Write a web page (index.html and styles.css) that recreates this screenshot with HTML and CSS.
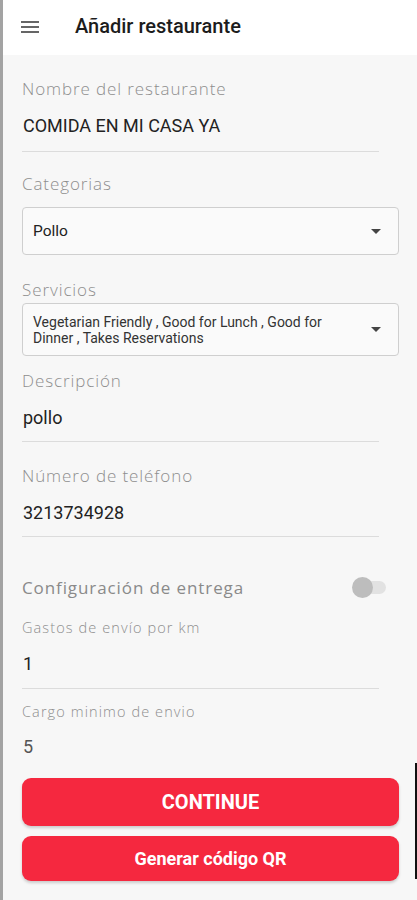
FILE: index.html
```html
<!DOCTYPE html>
<html lang="es">
<head>
<meta charset="UTF-8" />
<meta name="viewport" content="width=device-width, initial-scale=1" />
<title>Añadir restaurante</title>
<link rel="stylesheet" href="styles.css">
</head>
<body>
  <div class="screen">
    <header class="app-bar">
      <svg class="menu-icon" width="18" height="12" viewBox="0 0 18 12" aria-hidden="true">
        <rect x="0" y="0" width="18" height="2" fill="#666"/>
        <rect x="0" y="5" width="18" height="2" fill="#666"/>
        <rect x="0" y="10" width="18" height="2" fill="#666"/>
      </svg>
      <h1 class="app-title">Añadir restaurante</h1>
    </header>

    <main class="form">
      <div class="field field-name">
        <label class="label">Nombre del restaurante</label>
        <div class="value value-caps">COMIDA EN MI CASA YA</div>
      </div>

      <label class="label label-cat">Categorias</label>
      <div class="select select-cat">
        <span class="select-text">Pollo</span>
        <span class="caret"></span>
      </div>

      <label class="label label-serv">Servicios</label>
      <div class="select select-serv">
        <span class="select-text small">Vegetarian Friendly , Good for Lunch , Good for Dinner , Takes Reservations</span>
        <span class="caret"></span>
      </div>

      <div class="field field-desc">
        <label class="label">Descripción</label>
        <div class="value">pollo</div>
      </div>

      <div class="field field-phone">
        <label class="label">Número de teléfono</label>
        <div class="value">3213734928</div>
      </div>

      <div class="toggle-row">
        <span class="toggle-label">Configuración de entrega</span>
        <span class="switch"><span class="thumb"></span></span>
      </div>

      <div class="field field-km">
        <label class="label label-small">Gastos de envío por km</label>
        <div class="value">1</div>
      </div>

      <div class="field field-min no-line">
        <label class="label label-small">Cargo minimo de envio</label>
        <div class="value value-muted">5</div>
      </div>

      <button class="btn btn-continue">CONTINUE</button>
      <button class="btn btn-qr">Generar código QR</button>
    </main>
    <div class="scrollbar"></div>
  </div>
</body>
</html>
```

FILE: styles.css
```css
* {
  box-sizing: border-box;
}
html, body {
  margin: 0;
  padding: 0;
  background: #f7f7f7;
}
.screen {
  position: relative;
  width: 417px;
  height: 900px;
  border-left: 3px solid #a3a3a3;
  background: #f7f7f7;
  overflow: hidden;
  font-family: Roboto, "Noto Sans", sans-serif;
}
.app-bar {
  height: 55px;
  background: #fff;
  display: flex;
  align-items: center;
  padding-left: 18px;
}
.menu-icon {
  display: block;
  margin-top: -2px;
}
.app-title {
  margin: -3px 0 0 36px;
  font-size: 20px;
  font-weight: 500;
  color: #1c1c1c;
}
.form {
  padding: 0 15px 0 19px;
  display: flex;
  flex-direction: column;
}
.label {
  display: block;
  font-family: "Open Sans", Lato, sans-serif;
  font-weight: 300;
  font-size: 17px;
  letter-spacing: 0.9px;
  line-height: 20px;
  color: #8e8e8e;
  white-space: nowrap;
}
.label-small {
  font-size: 14.5px;
  letter-spacing: 1.1px;
  line-height: 18px;
}
.field {
  width: 357px;
  border-bottom: 1px solid #dcdcdc;
}
.field.no-line {
  border-bottom: none;
}
.value {
  font-size: 18px;
  line-height: 20px;
  color: #222;
  margin-top: 17px;
  padding-left: 1px;
}
.value-muted {
  color: #555;
}
.field-name {
  margin-top: 24px;
  padding-bottom: 15px;
}
.label-cat {
  margin-top: 22px;
}
.select {
  width: 377px;
  border: 1px solid #cfcfcf;
  border-radius: 4px;
  background: #fafafa;
  display: flex;
  align-items: center;
  justify-content: space-between;
  padding: 0 17px 0 10px;
}
.select-cat {
  margin-top: 13px;
  height: 48px;
}
.label-serv {
  margin-top: 25px;
}
.select-serv {
  margin-top: 3px;
  height: 53px;
}
.select-text {
  font-size: 15.5px;
  color: #222;
}
.select-text.small {
  font-size: 14px;
  line-height: 16px;
  color: #333;
  width: 310px;
}
.caret {
  width: 0;
  height: 0;
  border-left: 5px solid transparent;
  border-right: 5px solid transparent;
  border-top: 5px solid #444;
}
.field-desc {
  margin-top: 15px;
  padding-bottom: 13px;
}
.field-phone {
  margin-top: 24px;
  padding-bottom: 13px;
}
.toggle-row {
  margin-top: 40px;
  width: 364px;
  display: flex;
  align-items: center;
  justify-content: space-between;
  height: 20px;
}
.toggle-label {
  font-family: "Open Sans", Lato, sans-serif;
  font-weight: 400;
  font-size: 17px;
  letter-spacing: 0.9px;
  color: #8a8a8a;
  white-space: nowrap;
}
.switch {
  position: relative;
  width: 30px;
  height: 13px;
  border-radius: 7px;
  background: #e2e2e2;
}
.thumb {
  position: absolute;
  left: -4px;
  top: -4px;
  width: 21px;
  height: 21px;
  border-radius: 50%;
  background: #bdbdbd;
}
.field-km {
  margin-top: 22px;
  padding-bottom: 14px;
}
.field-km .value {
  margin-top: 17px;
}
.field-min {
  margin-top: 14px;
}
.field-min .value {
  margin-top: 16px;
}
.btn {
  width: 377px;
  border: none;
  border-radius: 9px;
  background: #f5283f;
  color: #fff;
  font-family: Roboto, sans-serif;
  font-weight: 700;
  box-shadow: 0 2px 3px rgba(0, 0, 0, 0.18);
}
.btn-continue {
  margin-top: 21px;
  height: 48px;
  font-size: 20px;
}
.btn-qr {
  margin-top: 10px;
  height: 45px;
  font-size: 18px;
}
.scrollbar {
  position: absolute;
  right: 0;
  top: 763px;
  width: 2px;
  height: 116px;
  background: #111;
}
```
